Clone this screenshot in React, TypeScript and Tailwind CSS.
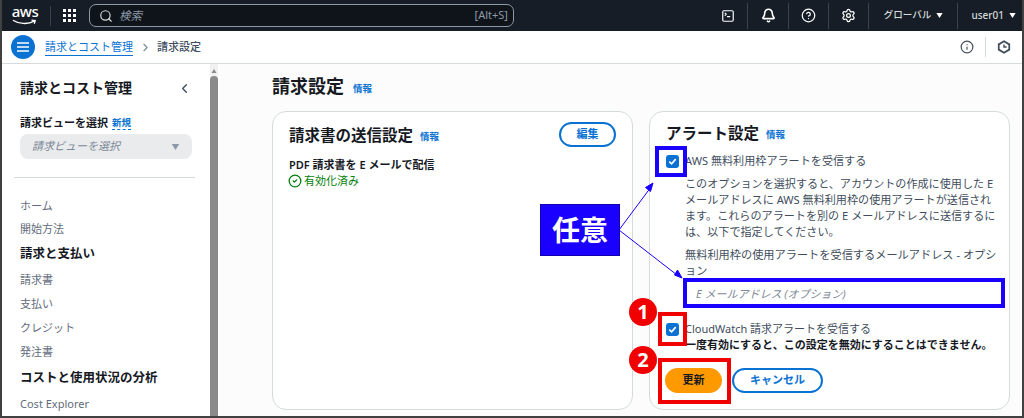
import { Bell, ChevronLeft, ChevronRight, CircleCheck, CircleHelp, Info, Search, Settings, SquareTerminal } from 'lucide-react';

const Caret = ({ className }: { className: string }) => (
  <svg viewBox="0 0 10 8" className={className} fill="currentColor">
    <path d="M0 0h10L5 8z" />
  </svg>
);

const Divider = () => <span className="h-[26px] w-px bg-[#3a4350]" />;

const InfoLink = ({ className = '' }: { className?: string }) => (
  <span className={`text-[9.5px] font-semibold leading-none text-[#0972d3] ${className}`}>情報</span>
);

const CheckBox = () => (
  <span className="flex h-[13px] w-[13px] shrink-0 items-center justify-center rounded-[3px] bg-[#0972d3]">
    <svg viewBox="0 0 12 12" className="h-[11px] w-[11px]" fill="none" stroke="white" strokeWidth="1.8">
      <path d="M2.5 6.2 5 8.6l4.5-5.2" />
    </svg>
  </span>
);

export default function App() {
  return (
    <div className="relative flex h-[418px] w-[1024px] flex-col overflow-hidden border-x-2 border-b-2 border-[#414141] bg-white font-['Noto_Sans','Noto_Sans_CJK_JP',sans-serif] text-[#414d5c]">
      <header className="flex h-[31px] shrink-0 items-center bg-[#161d26] text-[#d5dbdb]">
        <div className="ml-[9px] flex h-[24px] w-[28px] flex-col items-center text-white">
          <span className="text-[15px] font-medium leading-[15px] tracking-[-0.5px]">aws</span>
          <svg viewBox="0 0 28 7" className="h-[7px] w-[26px]" fill="none" stroke="white" strokeWidth="1.4">
            <path d="M1 1c6 4 16 5 23 1M21 1l4 .4-1 3.4" />
          </svg>
        </div>
        <span className="ml-[11px] h-[20px] w-px bg-[#3a4350]" />
        <div className="ml-[12px] grid h-[13px] w-[13px] grid-cols-3 gap-[2px]">
          {Array.from({ length: 9 }).map((_, i) => (
            <span key={i} className="bg-white" />
          ))}
        </div>
        <div className="ml-[13px] flex h-[23px] w-[425px] items-center rounded-[7px] border border-[#8d99a8] bg-[#0f141a] pl-[9px] pr-[5px]">
          <Search size={14} strokeWidth={2} className="text-[#d5dbdb]" />
          <span className="ml-[6px] text-[11.5px] italic text-[#8d99a8]">検索</span>
          <span className="ml-auto text-[11px] text-[#8d99a8]">[Alt+S]</span>
        </div>
        <div className="ml-auto flex items-center">
          <SquareTerminal size={14} strokeWidth={2} className="text-white" />
          <span className="ml-[12px] mr-[13px] flex"><Divider /></span>
          <Bell size={15} strokeWidth={2.6} className="text-white" />
          <span className="mx-[12px] flex"><Divider /></span>
          <CircleHelp size={15} strokeWidth={2} className="text-white" />
          <span className="mx-[12px] flex"><Divider /></span>
          <Settings size={15} strokeWidth={2} className="text-white" />
          <span className="mx-[12px] flex"><Divider /></span>
          <span className="ml-[3px] text-[9.6px] font-medium text-[#d5dbdb]">グローバル</span>
          <Caret className="ml-[5px] h-[5px] w-[7px] text-white" />
          <span className="ml-[14px] mr-[13px] flex"><Divider /></span>
          <span className="text-[10px] font-medium text-[#d5dbdb]">user01</span>
          <Caret className="ml-[5px] mr-[6px] h-[5px] w-[7px] text-white" />
        </div>
      </header>

      <nav className="flex h-[33px] shrink-0 items-center border-b border-[#d5dbdb] bg-white">
        <span className="ml-[9px] flex h-[24px] w-[24px] items-center justify-center rounded-full bg-[#0972d3]">
          <svg viewBox="0 0 12 10" className="h-[10px] w-[12px]" stroke="white" strokeWidth="1.6">
            <path d="M0 1h12M0 5h12M0 9h12" />
          </svg>
        </span>
        <span className="ml-[10px] border-b border-[#0972d3] text-[11px] leading-[16px] text-[#0972d3]">請求とコスト管理</span>
        <ChevronRight size={13} className="ml-[6px] text-[#7d8998]" />
        <span className="ml-[5px] text-[11px] font-medium text-[#414d5c]">請求設定</span>
        <div className="ml-auto mr-[10px] flex items-center">
          <Info size={14} strokeWidth={2} className="text-[#414d5c]" />
          <span className="mx-[11px] h-[20px] w-px bg-[#d5dbdb]" />
          <svg viewBox="0 0 16 16" className="mr-[1px] h-[14px] w-[14px]" fill="none" stroke="#414d5c" strokeWidth="2">
            <path d="M8 1.500 14 5v6l-6 3.500L2 11V5z" />
            <path d="M8 5v3h3" strokeWidth="1.600" />
          </svg>
        </div>
      </nav>

      <div className="flex min-h-0 flex-1">
        <aside className="relative w-[208px] shrink-0 overflow-hidden pl-[18px] text-[#5f6b7a]">
          <div className="mt-[15px] flex items-center justify-between pr-[18px]">
            <h2 className="text-[14px] font-bold leading-[18px] text-[#16191f]">請求とコスト管理</h2>
            <ChevronLeft size={15} strokeWidth={2.2} className="text-[#414d5c]" />
          </div>
          <div className="mt-[18px] flex items-center">
            <span className="text-[11px] font-bold leading-[16px] text-[#16191f]">請求ビューを選択</span>
            <span className="ml-[4px] border-b border-dashed border-[#0972d3] text-[9.5px] font-semibold leading-[12px] text-[#0972d3]">新規</span>
          </div>
          <div className="mt-[3px] flex h-[25px] w-[172px] items-center justify-between rounded-[8px] bg-[#e9ebed] pl-[12px] pr-[12px]">
            <span className="text-[11px] italic text-[#7d8998]">請求ビューを選択</span>
            <Caret className="h-[6px] w-[9px] text-[#8d99a8]" />
          </div>
          <div className="-ml-[6px] mt-[18px] h-px w-[181px] bg-[#d5dbdb]" />
          <ul className="mt-[20px] text-[11px] leading-[16px]">
            <li>ホーム</li>
            <li className="mt-[7px]">開始方法</li>
            <li className="mt-[8px] text-[12.5px] font-bold leading-[18px] text-[#16191f]">請求と支払い</li>
            <li className="mt-[9px]">請求書</li>
            <li className="mt-[8px]">支払い</li>
            <li className="mt-[8px]">クレジット</li>
            <li className="mt-[8px]">発注書</li>
            <li className="mt-[9px] text-[12.5px] font-bold leading-[18px] text-[#16191f]">コストと使用状況の分析</li>
            <li className="mt-[9px]">Cost Explorer</li>
          </ul>
        </aside>

        <div className="flex w-[8px] shrink-0 flex-col items-center bg-[#f1f1f1]">
          <Caret className="mt-[5px] h-[4px] w-[6px] rotate-180 text-[#8a8a8a]" />
          <span className="mt-[3px] w-full flex-1 rounded-t-[4px] bg-[#8a8a8a]" />
        </div>
        <div className="w-[2px] shrink-0 bg-white" />

        <main className="flex-1 bg-[#fcfcfc] pl-[52px]">
          <div className="mt-[9px] flex items-center">
            <h1 className="text-[18px] font-bold leading-[26px] text-[#16191f]">請求設定</h1>
            <InfoLink className="ml-[9px] mt-[5px]" />
          </div>
          <div className="mt-[12px] flex gap-[16px]">
            <section className="h-[299px] w-[361px] rounded-[14px] border border-[#d5dbdb] bg-white pl-[16px] pr-[16px] pt-[10px]">
              <div className="flex items-start justify-between">
                <div className="mt-[2px] flex items-center">
                  <h2 className="text-[15.5px] font-bold leading-[22px] text-[#16191f]">請求書の送信設定</h2>
                  <InfoLink className="ml-[7px] mt-[3px]" />
                </div>
                <button className="h-[25px] w-[57px] rounded-full border-2 border-[#0972d3] text-[11px] font-bold text-[#0972d3]">編集</button>
              </div>
              <p className="mt-[10px] text-[11px] font-semibold leading-[16px] text-[#16191f]">PDF 請求書を E メールで配信</p>
              <p className="flex items-center text-[11px] leading-[16px] text-[#037f0c]">
                <CircleCheck size={14} strokeWidth={2.2} className="mr-[2px] -ml-[1px]" />
                有効化済み
              </p>
            </section>

            <section className="h-[299px] w-[361px] rounded-[14px] border border-[#d5dbdb] bg-white pl-[16px] pr-[10px] pt-[10px]">
              <div className="flex items-center">
                <h2 className="text-[15.5px] font-bold leading-[22px] text-[#16191f]">アラート設定</h2>
                <InfoLink className="ml-[7px] mt-[3px]" />
              </div>
              <label className="mt-[9px] flex items-center gap-[6px] text-[11.1px] leading-[16px]">
                <CheckBox />
                AWS 無料利用枠アラートを受信する
              </label>
              <div className="pl-[19px]">
                <p className="mt-[7px] text-[11.1px] leading-[16px]">このオプションを選択すると、アカウントの作成に使用した E メールアドレスに AWS 無料利用枠の使用アラートが送信されます。これらのアラートを別の E メールアドレスに送信するには、以下で指定してください。</p>
                <p className="mt-[7px] text-[11.2px] leading-[16px]">無料利用枠の使用アラートを受信するメールアドレス - オプシ<br />ョン</p>
                <div className="mt-[1px] flex h-[29px] items-center pl-[11px] text-[11px] italic text-[#7d8998]">E メールアドレス (オプション)</div>
              </div>
              <label className="mt-[12px] flex items-center gap-[6px] text-[11px] leading-[16px]">
                <CheckBox />
                CloudWatch 請求アラートを受信する
              </label>
              <p className="pl-[19px] text-[11px] font-bold leading-[16px] text-[#16191f]">一度有効にすると、この設定を無効にすることはできません。</p>
              <div className="-ml-[1px] mt-[15px] flex gap-[10px]">
                <button className="h-[25px] w-[57px] rounded-full bg-[#ff9900] text-[11px] font-bold text-[#16191f]">更新</button>
                <button className="h-[25px] w-[91px] rounded-full border-2 border-[#0972d3] text-[11px] font-bold text-[#0972d3]">キャンセル</button>
              </div>
            </section>
          </div>
        </main>
      </div>

      {/* annotations on top of the screenshot */}
      <svg className="pointer-events-none absolute -left-[2px] top-0 h-[418px] w-[1024px]" viewBox="0 0 1024 418" fill="#1a00ff" stroke="#1a00ff">
        <path d="M619 230 651 187" fill="none" />
        <path d="M653 183l-7.500 4.500 5 4z" />
        <path d="M619 230 677 275" fill="none" />
        <path d="M682 278l-4.500-8-3 5z" />
      </svg>
      <div className="absolute left-[538px] top-[204px] flex h-[52px] w-[80px] items-center justify-center border border-[#1200b0] bg-[#1a00ff] text-[28px] font-bold text-white">任意</div>
      <div className="absolute left-[653px] top-[146px] h-[31px] w-[32px] border-[4px] border-[#1a00ff]" />
      <div className="absolute left-[681px] top-[278px] h-[30px] w-[322px] border-[4px] border-[#1a00ff]" />
      <div className="absolute left-[656px] top-[312px] h-[34px] w-[29px] border-[4px] border-[#f00000]" />
      <div className="absolute left-[656px] top-[358px] h-[46px] w-[73px] border-[4px] border-[#f00000]" />
      <div className="absolute left-[627px] top-[298px] flex h-[28px] w-[28px] items-center justify-center rounded-full bg-[#f00000] text-[20px] font-bold text-white">1</div>
      <div className="absolute left-[627px] top-[346px] flex h-[28px] w-[28px] items-center justify-center rounded-full bg-[#f00000] text-[20px] font-bold text-white">2</div>
    </div>
  );
}
